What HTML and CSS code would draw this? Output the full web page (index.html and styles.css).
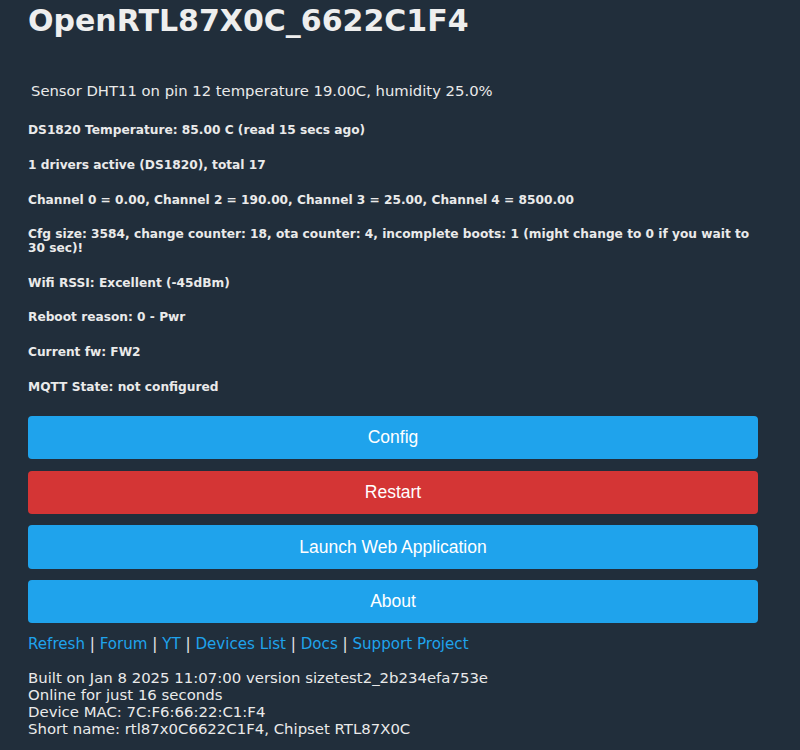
FILE: index.html
```html
<!DOCTYPE html>
<html>
<head>
<meta charset="utf-8">
<link rel="stylesheet" href="styles.css">
</head>
<body>
<div class="page">
  <h1 class="title">OpenRTL87X0C_6622C1F4</h1>
  <div class="sensor">Sensor DHT11 on pin 12 temperature 19.00C, humidity 25.0%</div>
  <div class="info">
    <p>DS1820 Temperature: 85.00 C (read 15 secs ago)</p>
    <p>1 drivers active (DS1820), total 17</p>
    <p>Channel 0 = 0.00, Channel 2 = 190.00, Channel 3 = 25.00, Channel 4 = 8500.00</p>
    <p>Cfg size: 3584, change counter: 18, ota counter: 4, incomplete boots: 1 (might change to 0 if you wait to 30 sec)!</p>
    <p>Wifi RSSI: Excellent (-45dBm)</p>
    <p>Reboot reason: 0 - Pwr</p>
    <p>Current fw: FW2</p>
    <p>MQTT State: not configured</p>
  </div>
  <div class="buttons">
    <button class="btn">Config</button>
    <button class="btn btn-red">Restart</button>
    <button class="btn">Launch Web Application</button>
    <button class="btn">About</button>
  </div>
  <div class="links">
    <a href="#">Refresh</a> | <a href="#">Forum</a> | <a href="#">YT</a> | <a href="#">Devices List</a> | <a href="#">Docs</a> | <a href="#">Support Project</a>
  </div>
  <div class="footer">
    <div>Built on Jan 8 2025 11:07:00 version sizetest2_2b234efa753e</div>
    <div>Online for just 16 seconds</div>
    <div>Device MAC: 7C:F6:66:22:C1:F4</div>
    <div>Short name: rtl87x0C6622C1F4, Chipset RTL87X0C</div>
  </div>
</div>
</body>
</html>
```
FILE: styles.css
```css
html, body {
  margin: 0;
  padding: 0;
  background: #212e3b;
}
body {
  font-family: "DejaVu Sans", Verdana, sans-serif;
  color: #eaeaea;
}
.page {
  width: 730px;
  padding-left: 28px;
}
.title {
  margin: 0;
  padding-top: 3px;
  font-size: 30px;
  line-height: 36px;
  font-weight: bold;
  color: #eeeeee;
}
.sensor {
  margin-top: 43px;
  padding-left: 3px;
  font-size: 14.8px;
  line-height: 18px;
}
.info {
  margin-top: 24px;
}
.info p {
  margin: 0 0 21.3px 0;
  font-size: 12.2px;
  line-height: 13.5px;
  font-weight: bold;
}
.buttons {
  display: flex;
  flex-direction: column;
  gap: 11.2px;
  margin-top: 0;
}
.btn {
  display: block;
  width: 100%;
  height: 43.5px;
  border: 0;
  border-radius: 4px;
  background: #1fa3ec;
  color: #ffffff;
  font-family: "Liberation Sans", Arial, sans-serif;
  font-size: 17.5px;
  padding: 0;
}
.btn-red {
  background: #d43535;
}
.links {
  margin-top: 11px;
  font-size: 15.1px;
  line-height: 20px;
  color: #eaeaea;
}
.links a {
  color: #1fa3ec;
  text-decoration: none;
}
.footer {
  margin-top: 16px;
  font-size: 14.9px;
  line-height: 17px;
}
```
